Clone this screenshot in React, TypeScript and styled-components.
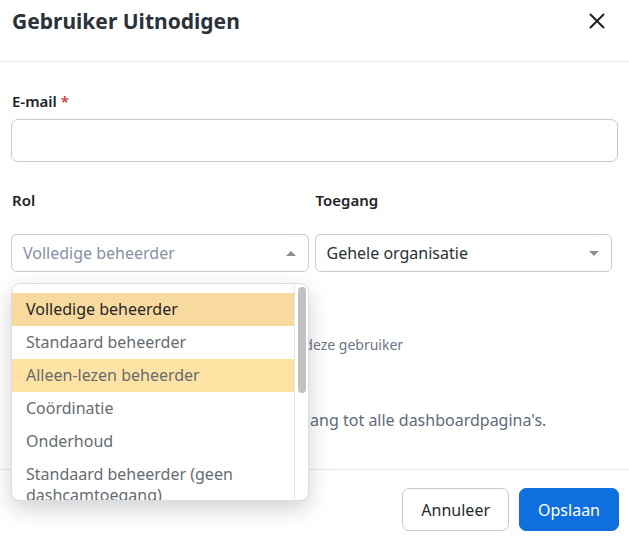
import { useState } from "react";
import styled, { createGlobalStyle } from "styled-components";

const GlobalStyle = createGlobalStyle`
  html, body {
    margin: 0;
    padding: 0;
    background: #ffffff;
    font-family: "Noto Sans", "Open Sans", sans-serif;
    color: #2b3138;
  }
  * {
    box-sizing: border-box;
  }
`;

const ROLES = [
  "Volledige beheerder",
  "Standaard beheerder",
  "Alleen-lezen beheerder",
  "Coördinatie",
  "Onderhoud",
  "Standaard beheerder (geen dashcamtoegang)",
];

const App = (): JSX.Element => {
  const [role] = useState<number>(0);
  const [hover] = useState<number>(2);

  return (
    <>
      <GlobalStyle />
      <Modal>
        <Header>
          <Title>Gebruiker Uitnodigen</Title>
          <CloseButton aria-label="Sluiten">
            <svg width="16" height="16" viewBox="0 0 16 16">
              <path
                d="M1.5 1.5 L14.5 14.5 M14.5 1.5 L1.5 14.5"
                stroke="#1d2024"
                strokeWidth="2"
                strokeLinecap="round"
              />
            </svg>
          </CloseButton>
        </Header>

        <Body>
          <Field>
            <Label>
              E-mail <Required>*</Required>
            </Label>
            <TextInput type="email" />
          </Field>

          <Row>
            <RowField>
              <Label $wide>Rol</Label>
              <SelectWrap>
                <SelectBox $placeholder>
                  <span>Volledige beheerder</span>
                  <Caret $up />
                </SelectBox>
                <Menu>
                  <MenuScroll>
                    {ROLES.map((r, i) => (
                      <Option key={r} $selected={i === role} $hover={i === hover}>
                        {r}
                      </Option>
                    ))}
                  </MenuScroll>
                  <ScrollTrack>
                    <ScrollThumb />
                  </ScrollTrack>
                </Menu>
              </SelectWrap>
            </RowField>
            <RowField>
              <Label $wide>Toegang</Label>
              <SelectBox>
                <span>Gehele organisatie</span>
                <Caret />
              </SelectBox>
            </RowField>
          </Row>

          <Section>
            <Label>Tags</Label>
            <Hint>Kies de tag(s) die zichtbaar moeten zijn voor deze gebruiker</Hint>
          </Section>

          <Section $tight>
            <Label>Rechten</Label>
            <Description>Gebruikers met deze rol verkrijgen toegang tot alle dashboardpagina's.</Description>
          </Section>
        </Body>

        <Footer>
          <Button>Annuleer</Button>
          <Button $primary>Opslaan</Button>
        </Footer>
      </Modal>
    </>
  );
};

export default App;

/* =================================================== */

const Modal = styled.div`
  width: 629px;
  height: 541px;
  display: flex;
  flex-direction: column;
  background: #fff;
  overflow: hidden;
`;

const Header = styled.div`
  height: 62px;
  flex: none;
  display: flex;
  align-items: flex-start;
  justify-content: space-between;
  padding: 6px 24px 0 12px;
  border-bottom: 1px solid #e4e6ea;
`;

const Title = styled.h1`
  margin: 0;
  font-size: 21px;
  line-height: 30px;
  font-weight: 700;
  color: #2c323a;
`;

const CloseButton = styled.button`
  border: 0;
  background: none;
  padding: 0;
  margin-top: 7px;
  width: 16px;
  height: 16px;
  cursor: pointer;
  display: flex;
`;

const Body = styled.div`
  height: 407px;
  flex: none;
  padding: 29px 11px 0 11px;
  display: flex;
  flex-direction: column;
`;

const Field = styled.div`
  display: flex;
  flex-direction: column;
`;

const RowField = styled(Field)`
  flex: 1;
`;

const Row = styled.div`
  display: flex;
  gap: 6px;
  width: 601px;
  margin-top: 28px;
`;

const Label = styled.div<{ $wide?: boolean }>`
  font-size: 15px;
  font-weight: 600;
  color: #1f2328;
  line-height: 20px;
  padding-left: 1px;
  margin-bottom: ${(p) => (p.$wide ? "24px" : "8px")};
`;

const Required = styled.span`
  color: #d23b3b;
`;

const TextInput = styled.input`
  height: 43px;
  width: 100%;
  border: 1px solid #c3cad4;
  border-radius: 7px;
  outline: none;
  font: inherit;
`;

const SelectWrap = styled.div`
  position: relative;
`;

const SelectBox = styled.div<{ $placeholder?: boolean }>`
  height: 38px;
  border: 1px solid #c3cad4;
  border-radius: 6px;
  display: flex;
  align-items: center;
  justify-content: space-between;
  padding: 0 12px 0 11px;
  font-size: 16px;
  color: ${(p) => (p.$placeholder ? "#8791a2" : "#2b3036")};
`;

const Caret = styled.span<{ $up?: boolean }>`
  width: 0;
  height: 0;
  border-left: 5px solid transparent;
  border-right: 5px solid transparent;
  ${(p) =>
    p.$up
      ? "border-bottom: 5px solid #8a8f96;"
      : "border-top: 5px solid #8a8f96;"}
`;

const Menu = styled.div`
  position: absolute;
  top: 49px;
  left: 0;
  width: 298px;
  height: 218px;
  background: #fff;
  border: 1px solid #d9dce0;
  border-radius: 9px;
  box-shadow: 0 8px 22px rgba(0, 0, 0, 0.18);
  overflow: hidden;
  display: flex;
  z-index: 10;
`;

const MenuScroll = styled.div`
  flex: 1;
  padding-top: 9px;
  overflow: hidden;
`;

const Option = styled.div<{ $selected?: boolean; $hover?: boolean }>`
  padding: 6px 14px;
  font-size: 16px;
  line-height: 21px;
  min-height: 33px;
  color: ${(p) => (p.$selected ? "#262626" : "#666b71")};
  background: ${(p) => (p.$selected ? "#f8da9f" : p.$hover ? "#fee3a4" : "transparent")};
`;

const ScrollTrack = styled.div`
  width: 14px;
  flex: none;
  border-left: 1px solid #e6e6e6;
  padding: 3px 3px 0 3px;
`;

const ScrollThumb = styled.div`
  width: 8px;
  height: 106px;
  border-radius: 4px;
  background: #c1c1c1;
`;

const Section = styled.div<{ $tight?: boolean }>`
  display: flex;
  flex-direction: column;
  margin-top: ${(p) => (p.$tight ? "30px" : "28px")};
`;

const Hint = styled.div`
  font-size: 14px;
  line-height: 20px;
  color: #6b7585;
  margin-top: 7px;
`;

const Description = styled.div`
  font-size: 16px;
  line-height: 22px;
  color: #5f6b7a;
  margin-top: -4px;
`;

const Footer = styled.div`
  height: 72px;
  flex: none;
  border-top: 1px solid #e4e6ea;
  display: flex;
  justify-content: flex-end;
  align-items: flex-start;
  gap: 10px;
  padding: 18px 10px 0 0;
`;

const Button = styled.button<{ $primary?: boolean }>`
  height: 43px;
  padding: 0 18px;
  border-radius: 7px;
  font-family: inherit;
  font-size: 16px;
  cursor: pointer;
  border: 1px solid ${(p) => (p.$primary ? "#0f6fdf" : "#c3cad4")};
  background: ${(p) => (p.$primary ? "#0f6fdf" : "#fff")};
  color: ${(p) => (p.$primary ? "#fff" : "#25292e")};
`;
